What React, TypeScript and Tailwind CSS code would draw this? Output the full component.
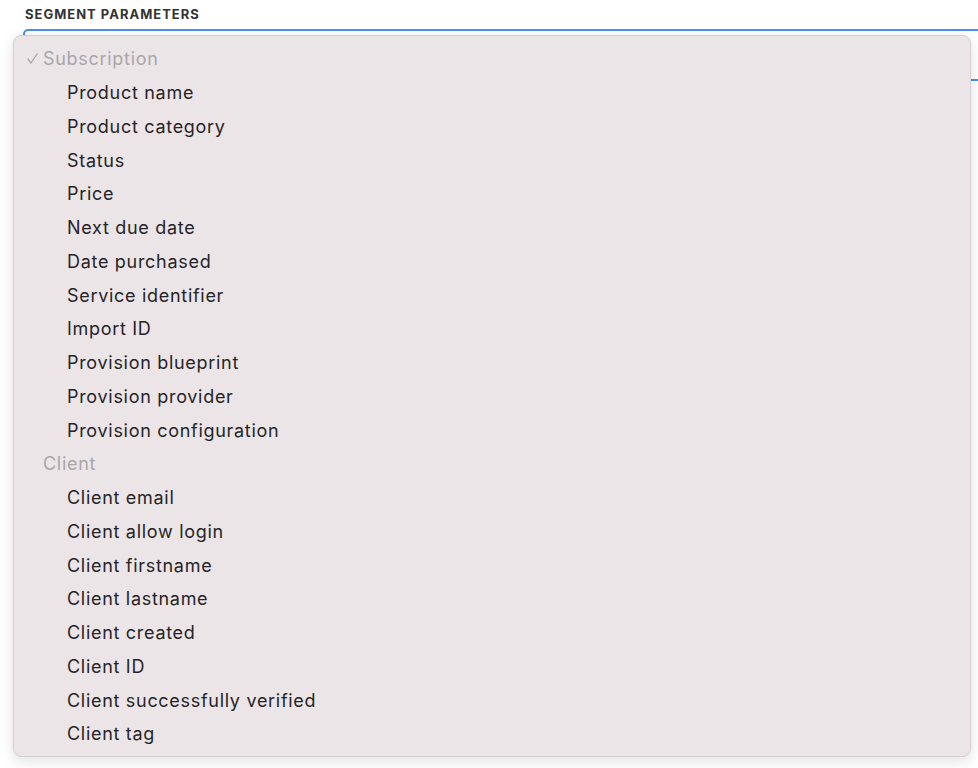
const groups = [
  {
    label: "Subscription",
    selected: true,
    items: [
      "Product name",
      "Product category",
      "Status",
      "Price",
      "Next due date",
      "Date purchased",
      "Service identifier",
      "Import ID",
      "Provision blueprint",
      "Provision provider",
      "Provision configuration",
    ],
  },
  {
    label: "Client",
    selected: false,
    items: [
      "Client email",
      "Client allow login",
      "Client firstname",
      "Client lastname",
      "Client created",
      "Client ID",
      "Client successfully verified",
      "Client tag",
    ],
  },
];

function Check() {
  return (
    <svg width="11" height="11" viewBox="0 0 11 11" fill="none" stroke="#aaa5a8" strokeWidth="1.3" strokeLinecap="round" strokeLinejoin="round">
      <polyline points="1,6 4,10 10,1" />
    </svg>
  );
}

export default function App() {
  return (
    <div className="relative h-[768px] w-[978px] overflow-hidden bg-white font-['Inter',sans-serif]">
      <div className="pl-[25px] pt-[6px] text-[13px] font-bold uppercase tracking-[1px] text-[#333] leading-[16px]">
        Segment parameters
      </div>

      {/* select field behind the open menu */}
      <div className="ml-[23px] mt-[7px] h-[52px] w-[1000px] rounded-[5px] border-2 border-[#4a90f0] bg-white" />

      {/* option list */}
      <div className="absolute left-[13px] top-[35px] w-[958px] rounded-[8px] border border-[#d4cfd2] bg-[#ebe5e8] pt-[6px] pb-[5px] shadow-[0_4px_14px_rgba(0,0,0,0.12)]">
        {groups.map((g) => (
          <div key={g.label}>
            <div className="flex h-[33.75px] items-center text-[18px] tracking-[0.7px] text-[#aaa5a8]">
              <span className="flex w-[29px] pl-[13px]">{g.selected ? <Check /> : null}</span>
              <span>{g.label}</span>
            </div>
            {g.items.map((item) => (
              <div key={item} className="flex h-[33.75px] items-center pl-[53px] text-[18px] tracking-[0.7px] text-[#262426]">
                {item}
              </div>
            ))}
          </div>
        ))}
      </div>
    </div>
  );
}
